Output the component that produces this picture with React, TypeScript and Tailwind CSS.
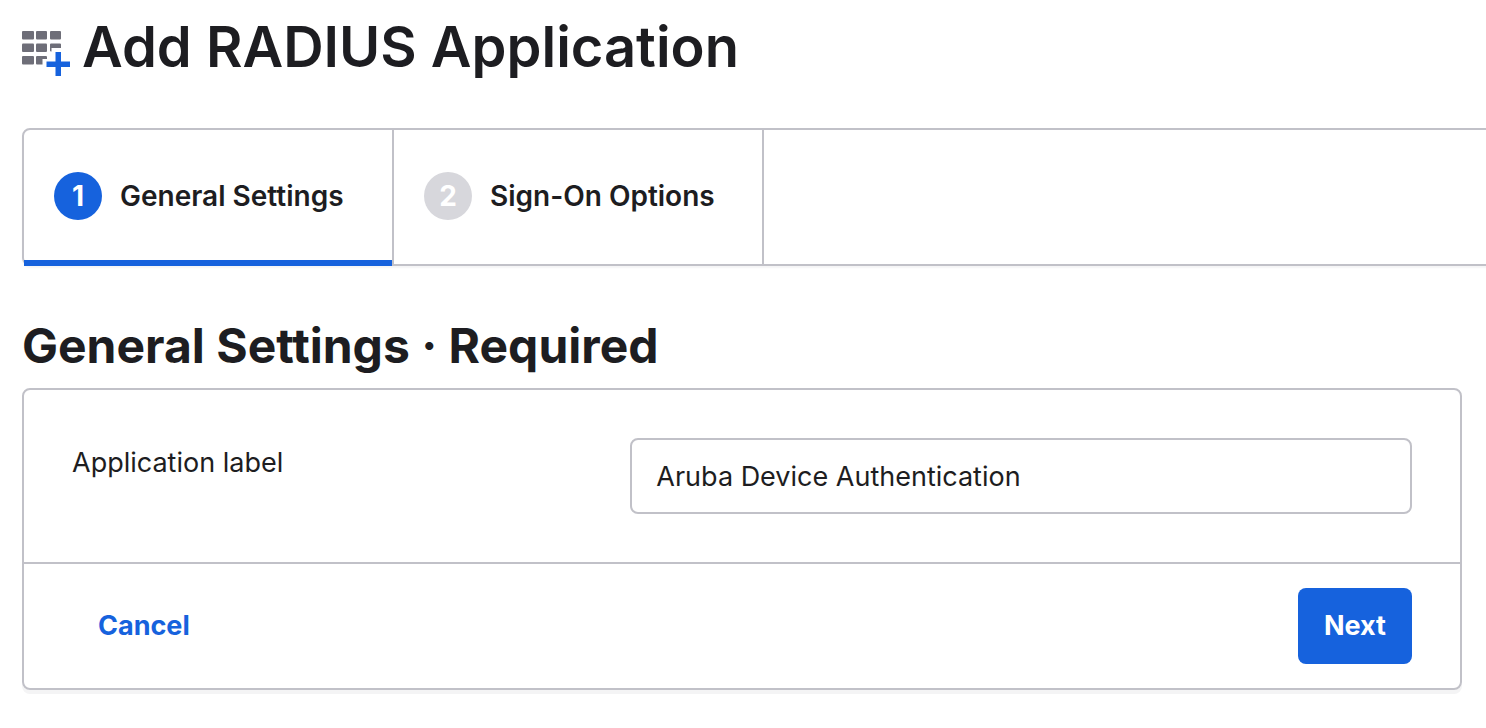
import { useState } from 'react'

const steps = ['General Settings', 'Sign-On Options']

function AddAppIcon() {
  return (
    <svg width="48" height="46" viewBox="0 0 48 46" aria-hidden="true" className="mt-3.5 shrink-0">
      <g fill="#6e6e78">
        <rect x="0" y="0" width="12" height="8.5" rx="1" />
        <rect x="14" y="0" width="11" height="8.5" rx="1" />
        <rect x="28" y="0" width="11" height="8.5" rx="1" />
        <rect x="0" y="12.5" width="12" height="8.5" rx="1" />
        <rect x="14" y="12.5" width="11" height="8.5" rx="1" />
        <path d="M29 12.5h9a1 1 0 0 1 1 1V17h-9.500v3.500H29a1 1 0 0 1-1-1v-6a1 1 0 0 1 1-1z" />
        <rect x="0" y="25" width="12" height="8.5" rx="1" />
        <path d="M15 25h9a1 1 0 0 1 1 1v2h-4.500v5.500H15a1 1 0 0 1-1-1V26a1 1 0 0 1 1-1z" />
      </g>
      <path fill="#1662dd" d="M33.500 21h5.500v9.500h9V36h-9v9h-5.500v-9h-9v-5.500h9z" />
    </svg>
  )
}

export default function App() {
  const [current, setCurrent] = useState(0)
  const [label, setLabel] = useState('Aruba Device Authentication')

  return (
    <div className="overflow-x-hidden bg-white pt-[11px] pr-6 pb-9 pl-[22px] font-['Inter',sans-serif] text-[27px] leading-9 text-[#1d1d21]">
      <header className="flex items-center gap-3">
        <AddAppIcon />
        <h1 className="text-[56px] leading-[72px] font-semibold">Add RADIUS Application</h1>
      </header>

      <nav className="mt-[45px] -mr-8 rounded-l-lg border-2 border-[#c1c1c8] shadow-[0_2px_2px_#f5f5f6]">
        <ol className="-mb-0.5 flex">
          {steps.map((step, i) => (
            <li key={step} className="border-r-2 border-[#c1c1c8]">
              <button
                type="button"
                aria-current={current === i ? 'step' : undefined}
                onClick={() => setCurrent(i)}
                className={`flex h-34 w-92 items-center gap-[18px] border-b-6 pt-0.5 pl-[30px] text-left text-[28px] font-semibold ${
                  current === i ? 'border-[#1662dd]' : 'border-transparent'
                }`}
              >
                <span
                  className={`flex size-12 items-center justify-center rounded-full font-bold text-white ${
                    current === i ? 'bg-[#1662dd]' : 'bg-[#d7d7dc]'
                  }`}
                >
                  {i + 1}
                </span>
                {step}
              </button>
            </li>
          ))}
        </ol>
      </nav>

      <h2 className="mt-12 text-[48px] leading-16 font-bold">General Settings · Required</h2>

      <form
        onSubmit={e => e.preventDefault()}
        className="mt-2.5 rounded-lg border-2 border-[#c1c1c8] shadow-[0_4px_0_#f4f4f5]"
      >
        <div className="grid grid-cols-[5fr_7fr] p-12">
          <label htmlFor="app-label" className="pt-[7px]">Application label</label>
          <input
            id="app-label"
            type="text"
            value={label}
            onChange={e => setLabel(e.target.value)}
            className="h-19 w-full rounded-lg border-2 border-[#c1c1c8] px-6"
          />
        </div>
        <div className="flex justify-between border-t-2 border-[#c1c1c8] px-12 py-6 text-[27px] font-bold">
          <button type="button" className="h-19 rounded-lg px-[26px] text-[#1662dd]">
            Cancel
          </button>
          <button type="submit" className="h-19 rounded-lg bg-[#1662dd] px-[26px] text-white">
            Next
          </button>
        </div>
      </form>
    </div>
  )
}
